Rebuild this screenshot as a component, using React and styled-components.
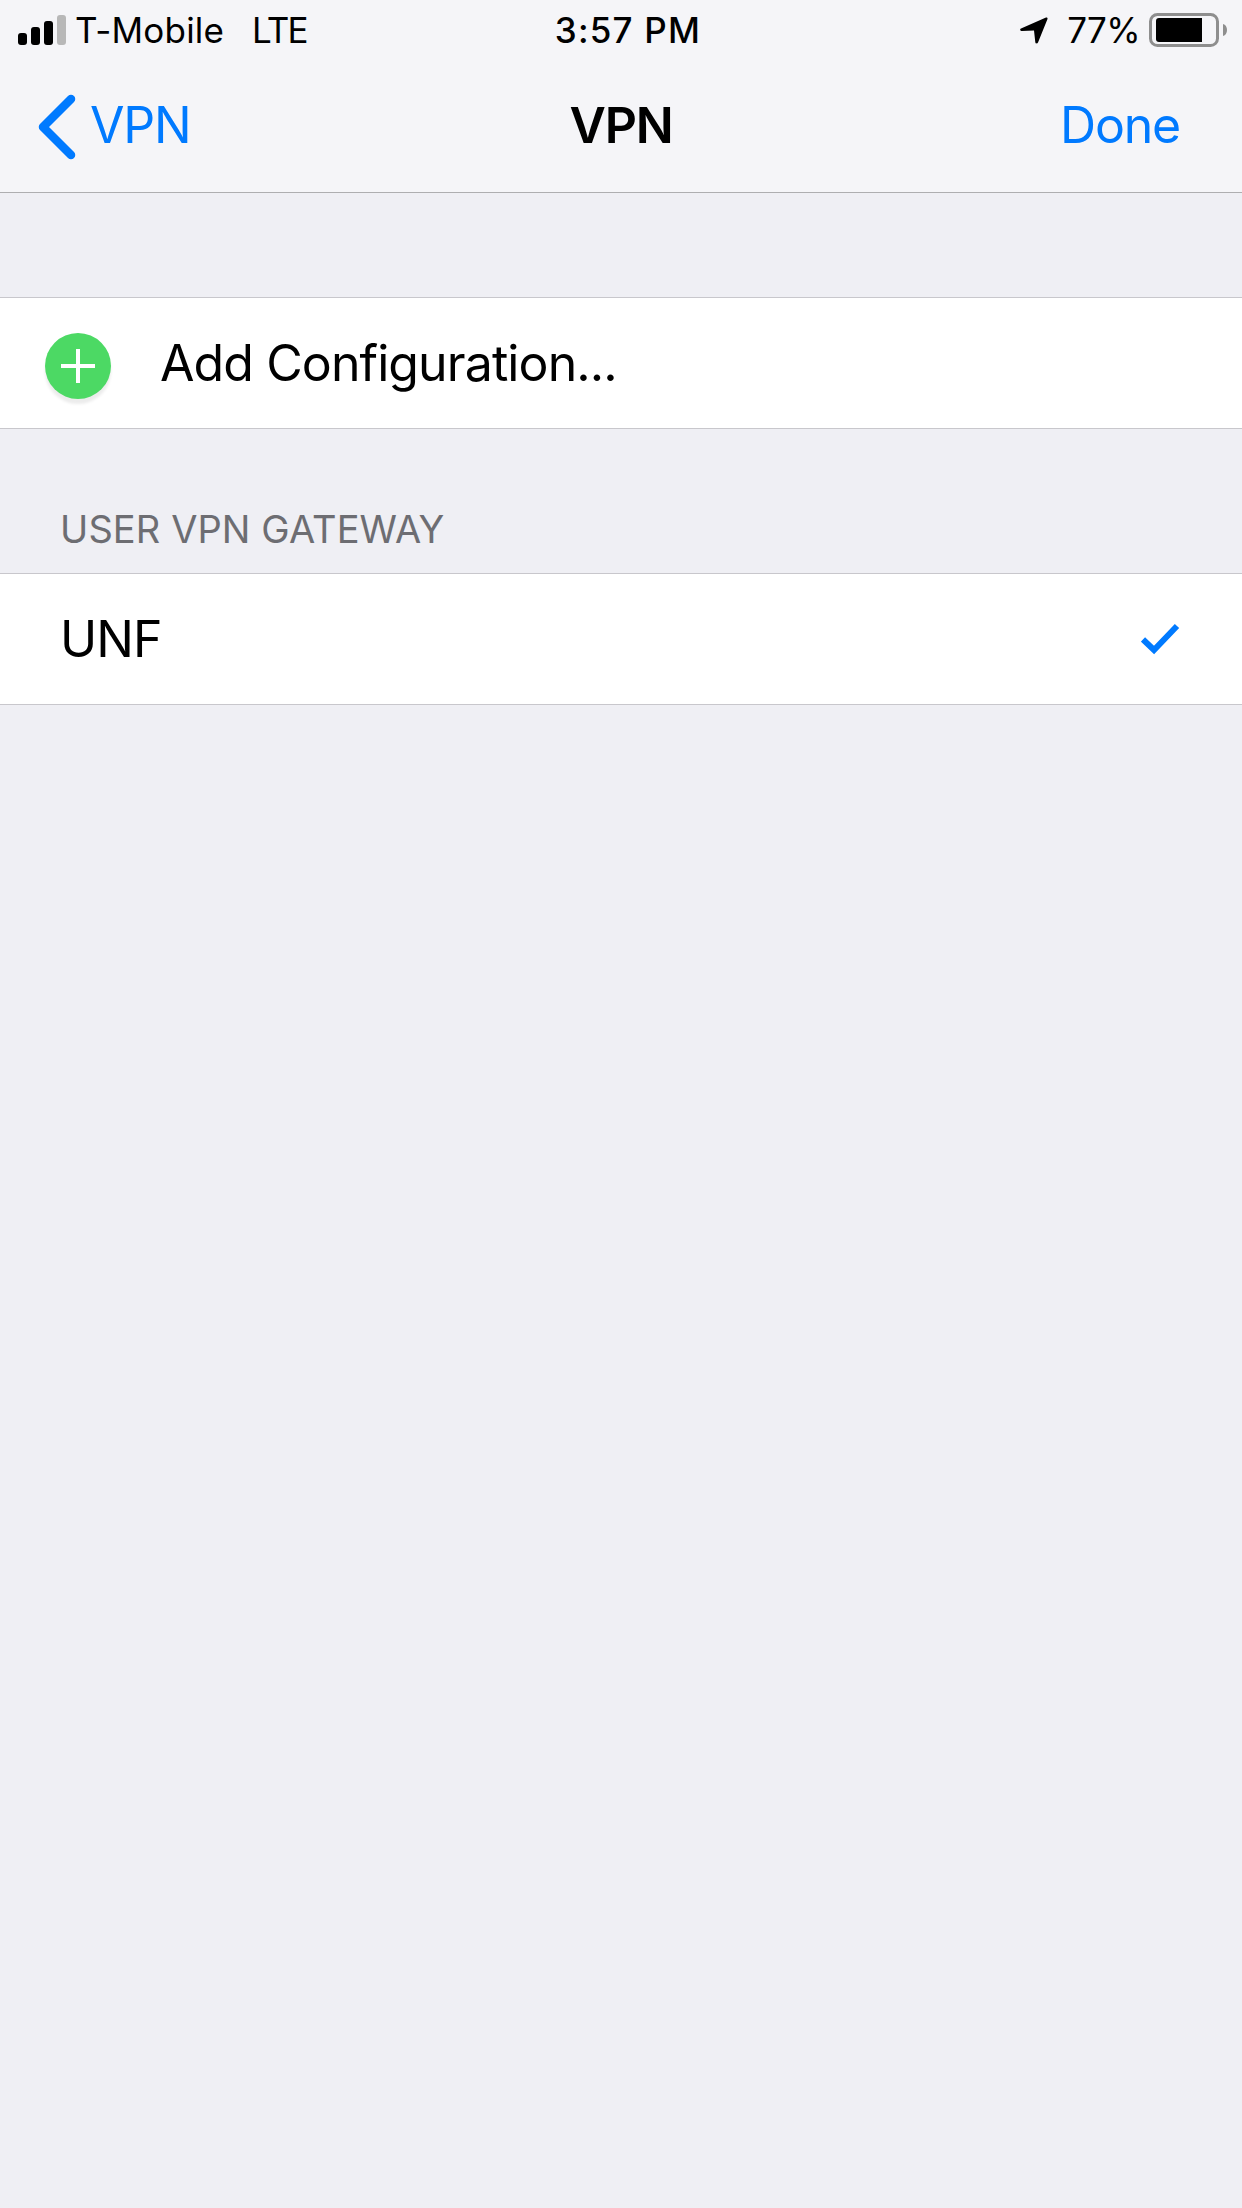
import styled, { createGlobalStyle } from "styled-components";

const GlobalStyle = createGlobalStyle`
  html, body {
    margin: 0;
    padding: 0;
    background: #efeff4;
  }
  body {
    font-family: Inter, "Liberation Sans", sans-serif;
  }
`;

const Page = styled.div`
  width: 1242px;
  height: 2208px;
  overflow: hidden;
  background: #efeff4;
`;

const Header = styled.header`
  height: 192px;
  background: #f5f5f8;
  border-bottom: 1px solid #aeaeb0;
`;

const StatusBar = styled.div`
  height: 60px;
  display: grid;
  grid-template-columns: 1fr auto 1fr;
  align-items: center;
  color: #000;
  font-size: 35px;
`;

const StatusLeft = styled.div`
  display: flex;
  align-items: center;
  padding-left: 18px;
`;

const StatusRight = styled.div`
  display: flex;
  align-items: center;
  justify-content: flex-end;
  padding-right: 15px;
`;

const Carrier = styled.span`
  margin-left: 9px;
  letter-spacing: 0.2px;
`;

const Network = styled.span`
  margin-left: 28px;
  letter-spacing: -1.8px;
`;

const Clock = styled.span`
  margin-left: 14px;
  font-weight: 500;
  letter-spacing: 1.2px;
`;

const Percent = styled.span`
  margin-left: 18px;
  letter-spacing: -0.6px;
`;

const Battery = styled.svg`
  margin-left: 9px;
`;

const NavBar = styled.nav`
  height: 130px;
  padding-bottom: 2px;
  display: grid;
  grid-template-columns: 1fr auto 1fr;
  align-items: center;
  font-size: 50px;
  letter-spacing: -1.2px;
`;

const BackLink = styled.div`
  display: flex;
  align-items: center;
  gap: 14px;
  padding-left: 37px;
  color: #007aff;
`;

const BackChevron = styled.svg`
  margin-top: 3px;
`;

const NavTitle = styled.div`
  font-weight: 600;
  color: #000;
`;

const DoneLink = styled.div`
  text-align: right;
  padding-right: 62px;
  color: #007aff;
`;

const Group = styled.section`
  margin-top: ${(p) => p.$top}px;
  background: #fff;
  border-top: 1px solid #c8c7cc;
  border-bottom: 1px solid #c8c7cc;
`;

const SectionLabel = styled.div`
  margin-top: 77px;
  padding-left: 60px;
  height: 67px;
  font-size: 38px;
  line-height: 46px;
  color: #6d6d72;
  letter-spacing: 0.1px;
`;

const Row = styled.div`
  height: 130px;
  display: flex;
  align-items: center;
  padding-left: ${(p) => p.$indent}px;
  padding-right: 62px;
  font-size: 50px;
  letter-spacing: -0.9px;
  color: #000;
`;

const RowLabel = styled.span`
  flex: 1;
`;

const AddBadge = styled.span`
  width: 66px;
  height: 66px;
  margin-top: 5px;
  margin-right: 49px;
  border-radius: 50%;
  background: #4cd964;
  box-shadow: 0 5px 3px #ececec;
  display: flex;
  align-items: center;
  justify-content: center;
`;

function App() {
  return (
    <Page>
      <GlobalStyle />
      <Header>
        <StatusBar>
          <StatusLeft>
            <svg width="48" height="30" viewBox="0 0 48 30">
              <rect x="0" y="18" width="9" height="12" rx="3" fill="#000" />
              <rect x="13" y="12" width="9" height="18" rx="3" fill="#000" />
              <rect x="26" y="6" width="9" height="24" rx="3" fill="#000" />
              <rect x="39" y="0" width="9" height="30" rx="3" fill="#b8b8b8" />
            </svg>
            <Carrier>T-Mobile</Carrier>
            <Network>LTE</Network>
          </StatusLeft>
          <Clock>3:57 PM</Clock>
          <StatusRight>
            <svg width="30" height="30" viewBox="0 0 30 30">
              <path
                d="M2 13.500 27 2.500c1-.4 1.800.4 1.500 1.400L19 27.500c-.5 1.400-2.500 1.300-2.700-.2L15 15.500 3 16c-1.800 0-2.500-1.800-1-2.500Z"
                fill="#000"
              />
            </svg>
            <Percent>77%</Percent>
            <Battery width="78" height="34" viewBox="0 0 78 34">
              <rect x="1.500" y="1.500" width="67" height="31" rx="7" fill="none" stroke="#8e8e8e" strokeWidth="3" />
              <path d="M7 8a3 3 0 0 1 3-3h43v24H10a3 3 0 0 1-3-3Z" fill="#000" />
              <path d="M74 11c2.500.6 4 3 4 6s-1.500 5.400-4 6Z" fill="#8e8e8e" />
            </Battery>
          </StatusRight>
        </StatusBar>
        <NavBar>
          <BackLink>
            <BackChevron width="39" height="66" viewBox="0 0 39 66">
              <path d="M34 5 6 33l28 28" fill="none" stroke="#007aff" strokeWidth="8.500" strokeLinecap="round" strokeLinejoin="round" />
            </BackChevron>
            VPN
          </BackLink>
          <NavTitle>VPN</NavTitle>
          <DoneLink>Done</DoneLink>
        </NavBar>
      </Header>

      <Group $top={104}>
        <Row $indent={45}>
          <AddBadge>
            <svg width="34" height="34" viewBox="0 0 34 34">
              <path d="M17 0v34M0 17h34" stroke="#fff" strokeWidth="4" />
            </svg>
          </AddBadge>
          <RowLabel>Add Configuration...</RowLabel>
        </Row>
      </Group>

      <SectionLabel>USER VPN GATEWAY</SectionLabel>

      <Group $top={0}>
        <Row $indent={60}>
          <RowLabel>UNF</RowLabel>
          <svg width="39" height="32" viewBox="0 0 39 32">
            <path d="M2 16.500 13 27 36 3" fill="none" stroke="#007aff" strokeWidth="6" />
          </svg>
        </Row>
      </Group>
    </Page>
  );
}

export default App;
